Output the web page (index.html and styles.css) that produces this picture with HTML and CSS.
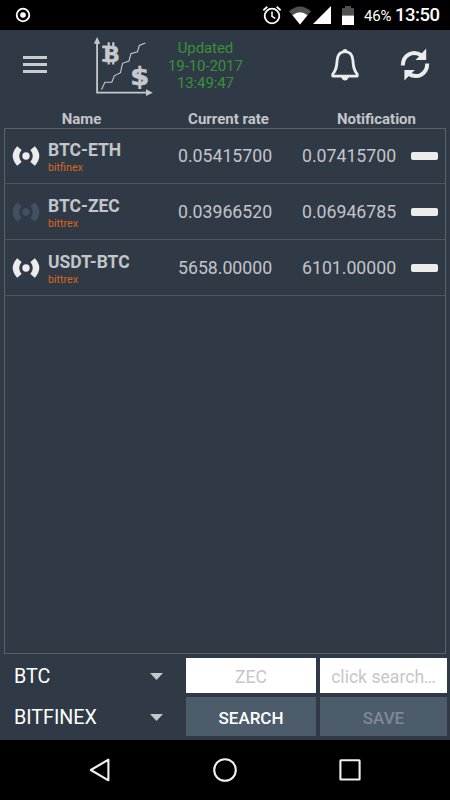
FILE: index.html
```html
<!DOCTYPE html>
<html lang="en">
<head>
<meta charset="utf-8">
<title>Rate notifications</title>
<link rel="stylesheet" href="styles.css">
</head>
<body>
<svg class="defs" width="0" height="0">
  <symbol id="signal" viewBox="0 0 28 22">
    <circle cx="14" cy="11" r="3.7"/>
    <path d="M5.2 1.2Q-3.8 11 5.2 20.8L9.6 17Q4.8 11 9.6 5Z"/>
    <path d="M22.8 1.2Q31.8 11 22.8 20.8L18.4 17Q23.2 11 18.4 5Z"/>
  </symbol>
</svg>
<div class="phone">
  <div class="status">
    <svg class="record" width="16" height="16" viewBox="0 0 16 16"><circle cx="8" cy="8" r="6.3" fill="none" stroke="#fff" stroke-width="1.8"/><circle cx="8" cy="8" r="2.8" fill="#fff"/></svg>
    <svg class="alarm" width="20" height="20" viewBox="0 0 20 20" fill="none" stroke="#fff"><circle cx="10" cy="11" r="7.3" stroke-width="1.8"/><path d="M10 6.6v4.8l3.3 2" stroke-width="1.5"/><path d="M1.4 5.2 5.3 1.8M18.6 5.2 14.7 1.8" stroke-width="1.8"/></svg>
    <svg class="wifi" width="22" height="19" viewBox="0 0 22 19"><path d="M0 5.2Q11-4.2 22 5.2L11 18.5Z" fill="#505050"/><path d="M3.5 9.2Q11 3.3 18.5 9.2L11 18.5Z" fill="#fff"/></svg>
    <svg class="cell" width="18" height="18" viewBox="0 0 18 18"><path d="M0 18 18 0v18z" fill="#fff"/></svg>
    <svg class="battery" width="12" height="19" viewBox="0 0 12 19"><path d="M0 2h3V0h6v2h3v8H0z" fill="#505050"/><path d="M0 9.6h12V19H0z" fill="#fff"/></svg>
    <span class="percent">46%</span>
    <span class="clock">13:50</span>
  </div>

  <header class="appbar">
    <div class="menu"><i></i><i></i><i></i></div>
    <svg class="logo" width="62" height="62" viewBox="0 0 62 62">
      <g fill="none" stroke="#c6c8cc">
        <path d="M5.1 6v49.7H55" stroke-width="1.8"/>
        <path d="M9.5 52.5 12.9 45.2H19.8L22.3 38.8 28.5 35.7 30.5 26.3 37 24 38.9 16.6 45.5 14.7 47.3 8.5 53.3 6" stroke-width="1.1"/>
      </g>
      <path d="M5.1 0 8.3 6.8H1.9zM60.8 55.7l-6.8 3.4v-6.8z" fill="#c6c8cc"/>
      <g fill="#c6c8cc">
        <text x="11.2" y="24.8" class="coin-b">B</text>
        <path d="M10.2 8.4h4.5v2.8h-4.5zM10.2 22h4.5v2.8h-4.5zM15.6 5.2h2.2v4h-2.2zM20.2 5.2h2.2v4h-2.2zM15.6 24h2.2v3.4h-2.2zM20.2 24h2.2v3.4h-2.2z"/>
        <text x="38.2" y="48" class="coin-d" textLength="19" lengthAdjust="spacingAndGlyphs">$</text>
      </g>
    </svg>
    <div class="updated">Updated<br>19-10-2017<br>13:49:47</div>
    <svg class="bell" width="30" height="34" viewBox="0 0 30 34">
      <path d="M15 3.7C10 3.7 7.5 7.5 7.1 12.5 6.7 19 6.2 22 2.8 26.2Q2 28.2 4 28.2H26Q28 28.2 27.2 26.2C23.8 22 23.3 19 22.9 12.5 22.5 7.5 20 3.7 15 3.7Z" fill="none" stroke="#ececec" stroke-width="2.8" stroke-linejoin="round"/>
      <path d="M12.5 3.3Q12.7 1 15 1T17.5 3.3ZM11.2 29h7.6Q17.8 32.4 15 32.4T11.2 29Z" fill="#ececec"/>
    </svg>
    <svg class="sync" width="30" height="34" viewBox="0 0 30 34">
      <path d="M2.8 17.5C2.8 7.3 12.5 1.8 21.5 7.2M27.2 15.5C27.2 26 17.5 31.3 8.5 25.8" fill="none" stroke="#ececec" stroke-width="4"/>
      <path d="M26.2.5V12H15.6zM4.4 32.5V22H14.8z" fill="#ececec"/>
    </svg>
  </header>

  <div class="heads"><span>Name</span><span>Current rate</span><span>Notification</span></div>

  <main class="list">
    <div class="row">
      <svg class="sig" width="28" height="22"><use href="#signal"/></svg>
      <div class="name"><b>BTC-ETH</b><small>bitfinex</small></div>
      <span class="num">0.05415700</span><span class="num">0.07415700</span><i class="minus"></i>
    </div>
    <div class="row">
      <svg class="sig off" width="28" height="22"><use href="#signal"/></svg>
      <div class="name"><b>BTC-ZEC</b><small>bittrex</small></div>
      <span class="num">0.03966520</span><span class="num">0.06946785</span><i class="minus"></i>
    </div>
    <div class="row">
      <svg class="sig" width="28" height="22"><use href="#signal"/></svg>
      <div class="name"><b>USDT-BTC</b><small>bittrex</small></div>
      <span class="num">5658.00000</span><span class="num">6101.00000</span><i class="minus"></i>
    </div>
  </main>

  <div class="form">
    <div class="select">BTC<svg width="13" height="7" viewBox="0 0 13 7"><path d="M0 0h13L6.5 7z"/></svg></div>
    <div class="field">ZEC</div>
    <div class="field">click search…</div>
    <div class="select lower">BITFINEX<svg width="13" height="7" viewBox="0 0 13 7"><path d="M0 0h13L6.5 7z"/></svg></div>
    <div class="button">SEARCH</div>
    <div class="button disabled">SAVE</div>
  </div>

  <nav class="nav">
    <svg width="26" height="26" viewBox="0 0 26 26"><path d="M3.8 13 21.4 2.7V23.3Z"/></svg>
    <svg width="26" height="26" viewBox="0 0 26 26"><circle cx="13" cy="13" r="10.8"/></svg>
    <svg width="26" height="26" viewBox="0 0 26 26"><rect x="3.4" y="3.3" width="19.2" height="19.2" rx=".6"/></svg>
  </nav>
</div>
</body>
</html>
```
FILE: styles.css
```css
* { box-sizing: border-box; }
body { margin: 0; background: #000; font-family: Roboto, sans-serif; }
svg { display: block; flex: none; }
.defs { position: absolute; }
.phone { width: 450px; height: 800px; display: flex; flex-direction: column; background: #303a47; overflow: hidden; }

.status { height: 30px; flex: none; display: flex; align-items: center; background: #000; color: #fff; padding: 0 9px 0 14.5px; }
.record { margin-right: auto; }
.alarm { margin-right: 7px; }
.wifi { margin-right: 2px; }
.cell { margin-right: 11px; }
.battery { margin-right: 10px; }
.percent { width: 31px; padding-top: 1px; font-size: 15px; letter-spacing: -.2px; white-space: nowrap; }
.clock { width: 46px; font-size: 18.5px; font-weight: 500; letter-spacing: -.5px; white-space: nowrap; }

.appbar { height: 79px; flex: none; display: flex; align-items: flex-start; padding: 7px 20px 0 23px; }
.menu { width: 24px; margin: 19px 45px 0 0; display: grid; gap: 4px; }
.menu i { height: 3px; background: #c9cbce; }
.logo { margin-right: 6px; }
.coin-b { font: bold 22px "DejaVu Sans", sans-serif; stroke: #c6c8cc; stroke-width: .3; }
.coin-d { font: bold 24px "DejaVu Sans", sans-serif; stroke: #c6c8cc; stroke-width: .6; }
.updated { width: 92px; margin: 3px 79px 0 0; color: #389138; font-size: 15px; line-height: 17.5px; letter-spacing: -.1px; text-align: center; }
.bell { margin: 11px 40px 0 0; }
.sync { margin-top: 11px; }

.heads { height: 19px; flex: none; display: grid; grid-template-columns: 155px 139px 157px; padding-left: 4px; color: #c3c5c8; font-size: 15px; font-weight: 700; line-height: 20px; text-align: center; }

.list { height: 526px; flex: none; margin: 0 4px; border: 1px solid #5c6162; }
.row { height: 56px; display: flex; align-items: center; padding: 1px 6px 0 7px; border-bottom: 1px solid #4c5661; }
.row:first-child { height: 55px; padding-top: 0; }
.sig { margin-right: 8px; fill: #ececec; }
.sig.off { fill: #425061; }
.name { width: 130px; display: flex; flex-direction: column; padding-top: 3px; }
.name b { font-size: 17.5px; line-height: 20px; color: #c3c5c8; font-weight: 700; }
.name small { font-size: 10.7px; line-height: 16px; color: #d9661c; }
.num { width: 124px; color: #c3c5c8; font-size: 17.7px; }
.num + .num { width: 109px; }
.minus { width: 27px; height: 8px; flex: none; border-radius: 2px; background: #ececec; }

.form { height: 86px; flex: none; display: grid; grid-template-columns: 182px 130px 127px; grid-template-rows: 35px 39px; gap: 4px; padding: 4px 0 0; color: #fff; font-size: 17.6px; }
.select { display: flex; align-items: center; justify-content: space-between; padding: 1px 19px 0 14px; font-size: 19.7px; }
.lower { padding-top: 2px; }
.select svg { fill: #c3c8ca; }
.field { display: flex; align-items: center; justify-content: center; background: #fff; color: #c7c7c7; padding-top: 2px; white-space: nowrap; }
.button { display: flex; align-items: center; justify-content: center; background: #4d5c6a; font-size: 17px; font-weight: 500; padding-top: 2px; }
.disabled { color: #808992; }

.nav { height: 60px; flex: none; display: flex; align-items: center; justify-content: space-between; padding: 0 87px; background: #000; }
.nav svg { fill: none; stroke: #f0f0f0; stroke-width: 2.1; stroke-linejoin: round; }
```
